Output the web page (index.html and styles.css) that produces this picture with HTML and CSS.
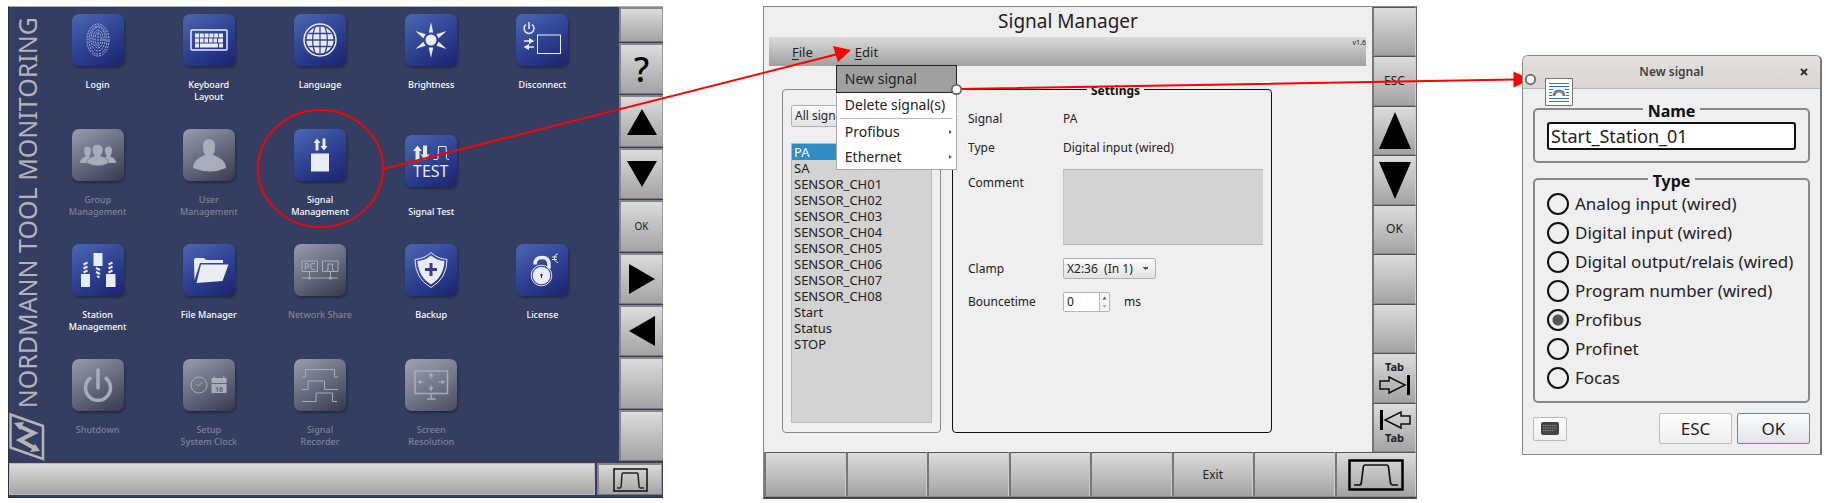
FILE: index.html
```html
<!DOCTYPE html>
<html lang="en">
<head>
    <meta charset="UTF-8">
    <meta name="viewport" content="width=device-width, initial-scale=1.0">
    <title>Signal Manager</title>
    <link rel="stylesheet" href="styles.css">
</head>
<body>
<div class="page">

    <!-- Start screen -->
    <section class="launcher">
        <div class="launcher-top">
            <div class="brand">
                <span class="brand-text">NORDMANN TOOL MONITORING</span>
                <svg class="brand-logo" viewBox="0 0 36 50">
                    <path d="M1.500 2.500 34 14v33L1.500 35.500z" fill="none" stroke="#b4b4b4" stroke-width="2.500"/>
                    <path d="M10 14l15 7-14 7 16 9" fill="none" stroke="#b4b4b4" stroke-width="4"/>
                    <path d="M5 11l10-1-4 8zM31 39l-10 1 5-8z" fill="#b4b4b4"/>
                </svg>
            </div>
            <div class="apps">
                <button class="app">
                    <svg class="tile" viewBox="0 0 52 52"><g class="print">
                        <ellipse cx="26" cy="26" rx="11" ry="16"/><ellipse cx="26" cy="26" rx="9" ry="14"/><ellipse cx="26" cy="25" rx="7" ry="12"/><ellipse cx="26" cy="25" rx="5" ry="9"/><ellipse cx="26" cy="25" rx="3" ry="7"/><path d="M26 19v13"/>
                    </g></svg>
                    <span>Login</span>
                </button>
                <button class="app">
                    <svg class="tile" viewBox="0 0 52 52">
                        <rect class="line" x="8" y="16" width="36" height="20" rx="1"/>
                        <path d="M12 21.500h28" stroke="#e9ebf5" stroke-width="4" stroke-dasharray="4 .8"/>
                        <path d="M12 26.500h4m1 0h3.500m1 0h3.500m1 0h3.500m1 0h3.500m1 0h5M12 31.500h4m1 0h18m1 0h4" stroke="#e9ebf5" stroke-width="4"/>
                    </svg>
                    <span>Keyboard<br>Layout</span>
                </button>
                <button class="app">
                    <svg class="tile" viewBox="0 0 52 52">
                        <circle class="line" cx="26" cy="26" r="16" stroke-width="2"/>
                        <circle class="fill" cx="26" cy="26" r="13.500"/>
                        <path d="M26 12v28M12 26h28M14.500 19.500h23M14.500 32.500h23M21 13q-5 13 0 26M31 13q5 13 0 26" fill="none" stroke="#33479a" stroke-width="1.300"/>
                    </svg>
                    <span>Language</span>
                </button>
                <button class="app">
                    <svg class="tile" viewBox="0 0 52 52">
                        <circle class="fill" cx="26" cy="26" r="5.500"/>
                        <g class="fill"><path id="ray" d="M23.800 18.500 26 8l2.200 10.500z"/><use href="#ray" transform="rotate(60 26 26)"/><use href="#ray" transform="rotate(120 26 26)"/><use href="#ray" transform="rotate(180 26 26)"/><use href="#ray" transform="rotate(240 26 26)"/><use href="#ray" transform="rotate(300 26 26)"/></g>
                    </svg>
                    <span>Brightness</span>
                </button>
                <button class="app">
                    <svg class="tile" viewBox="0 0 52 52">
                        <path class="line" d="M13 8v7M10 10.500a5 5 0 1 0 6 0M8 27h6M18 33h-6"/>
                        <path class="fill" d="M13 24l5.500 3-5.500 3zM13 30l-5.500 3 5.500 3z"/>
                        <rect class="line thin" x="21.500" y="21" width="23" height="18.500"/>
                    </svg>
                    <span>Disconnect</span>
                </button>

                <button class="app off" disabled>
                    <svg class="tile" viewBox="0 0 52 52">
                        <g class="fill"><path d="M8 34q0-5 6-6.500-2-3-2-6 0-4 3.500-4t3.500 4q0 3-2 6l5 2-4 4.500zM44 34q0-5-6-6.500 2-3 2-6 0-4-3.500-4t-3.500 4q0 3 2 6l-5 2 4 4.500z"/>
                        <path d="M14.500 34q0-5 8-7-2.500-3-2.500-6.500 0-5 5.500-5t5.500 5q0 3.500-2.500 6.500 8 2 8 7-11 5.500-22 0z" stroke="#70788c" stroke-width=".8"/></g>
                    </svg>
                    <span>Group<br>Management</span>
                </button>
                <button class="app off" disabled>
                    <svg class="tile" viewBox="0 0 52 52">
                        <path class="fill" d="M10 39q0-9 12-13-2-3-2-8 0-8 6-8t6 8q0 5-2 8 13 4 13 13-16 7-33 0z"/>
                    </svg>
                    <span>User<br>Management</span>
                </button>
                <button class="app">
                    <svg class="tile" viewBox="0 0 52 52">
                        <path class="fill" d="M23 9.500l3.500 4.500h-2v7.500h-3V14h-2zM30 21.500l-3.500-4.500h2V9.500h3V17h2zM17 24.500h18v18H17z"/>
                    </svg>
                    <span>Signal<br>Management</span>
                </button>
                <button class="app app-low">
                    <svg class="tile" viewBox="0 0 52 52">
                        <path class="fill" d="M12.500 10.500l4.500 5.500h-2.500v9h-4v-9H8zM20 25l-4.500-5.500H18v-9h4v9h2.500z"/>
                        <path class="line thin" d="M28.500 24.500h3.500q1 0 1-2l.5-11h7.500l.5 11q0 2 1 2h1.500"/>
                        <text x="8" y="42" class="tile-test">TEST</text>
                    </svg>
                    <span>Signal Test</span>
                </button>
                <div></div>

                <button class="app">
                    <svg class="tile" viewBox="0 0 52 52">
                        <path class="fill" d="M9 30h9v13H9zM21.500 9h9v13h-9zM34 30h9.500v13H34z"/>
                        <path class="line thick" d="M11.500 20.500l4-2M11.500 24.500l4-2M11.500 28.500l4-2M24 24l4 2M24 28l4 2M25 32l2.500 1.500M36.500 20.500l4-2M36.500 24.500l4-2M36.500 28.500l4-2"/>
                    </svg>
                    <span>Station<br>Management</span>
                </button>
                <button class="app">
                    <svg class="tile" viewBox="0 0 52 52">
                        <path class="fill" d="M11 16l1-2h9l2 2h17v3H17L11.500 36zM18 20.500h27.500L39.500 37l-26 2z"/>
                    </svg>
                    <span>File Manager</span>
                </button>
                <button class="app off" disabled>
                    <svg class="tile" viewBox="0 0 52 52">
                        <path class="line thin" d="M8 17h15.500v10.500H8zM28.500 17H44v10.500H28.500zM8 34h36M15.500 28v6M36.500 28v6M32 26h2v-6h4.500v6h2"/>
                        <text x="10" y="25.500" class="tile-pc">PC</text>
                        <circle class="fill" cx="15.500" cy="34" r="1.500"/><circle class="fill" cx="36.500" cy="34" r="1.500"/>
                    </svg>
                    <span>Network Share</span>
                </button>
                <button class="app">
                    <svg class="tile" viewBox="0 0 52 52">
                        <path class="line thin" d="M26 8.500q6 6 16 7 0 19-16 28-16-9-16-28 10-1 16-7z"/>
                        <path class="fill" d="M26 11.500q6 5 13.500 5.500-1 16-13.500 23.500Q13.500 33 12.500 17 20 16.500 26 11.500z"/>
                        <path d="M26 19v13M20 25.500h12" stroke="#2d3f90" stroke-width="3"/>
                    </svg>
                    <span>Backup</span>
                </button>
                <button class="app">
                    <svg class="tile" viewBox="0 0 52 52">
                        <path class="line heavy" d="M19 20.500q0-7 7-7t7 7v4"/>
                        <circle class="line thin" cx="25.500" cy="31.500" r="10.300"/><circle class="fill" cx="25.500" cy="31.500" r="8.800"/>
                        <circle cx="25.500" cy="31" r="1.200" fill="#26357f"/><path d="M25.500 31v3" stroke="#26357f"/>
                        <path class="line thin" d="M42 10h-1q-2.500 1-2.500 4t2.500 4.500h1M36 13h5M36 15.500h5"/>
                    </svg>
                    <span>License</span>
                </button>

                <button class="app off" disabled>
                    <svg class="tile" viewBox="0 0 52 52">
                        <path class="line heavy" d="M19 18.500a12.500 12.500 0 1 0 14 0"/><path class="line heavy" d="M26 11v18" stroke-linecap="round"/>
                    </svg>
                    <span>Shutdown</span>
                </button>
                <button class="app off" disabled>
                    <svg class="tile" viewBox="0 0 52 52">
                        <circle class="line thin" cx="16" cy="26" r="8"/><path class="line thin" d="M13 25l2.500 2 4-4"/>
                        <path class="fill" d="M28.500 19h15v5h-15zM30.500 17.500h1.500v2h-1.500zM40 17.500h1.500v2H40z"/>
                        <path class="fill" d="M28.500 25h15v9h-15z"/><text x="32" y="32.500" class="tile-day">16</text>
                    </svg>
                    <span>Setup<br>System Clock</span>
                </button>
                <button class="app off" disabled>
                    <svg class="tile" viewBox="0 0 52 52">
                        <path class="line thin" d="M8 18h3.500v-7.500h29V18H44M8 30.500h6V22h16.500v8.500H44M8 42.500h14V34h16.500v8.500H43"/>
                    </svg>
                    <span>Signal<br>Recorder</span>
                </button>
                <button class="app off light" disabled>
                    <svg class="tile" viewBox="0 0 52 52">
                        <rect class="line" x="10" y="12" width="32.500" height="22.500"/>
                        <path class="line thin" d="M26 16v4M26 26v4M15 23h4M33 23h4"/>
                        <path class="line" d="M26 35v5M22 40h8.500"/>
                        <path class="fill" d="M26 13.500l2.500 4h-5zM26 32.500l2.500-4h-5zM12 23l4-2.500v5zM40.500 23l-4-2.500v5z"/>
                    </svg>
                    <span>Screen<br>Resolution</span>
                </button>
            </div>
            <div class="keys">
                <button class="key key-first" aria-label="Blank"></button>
                <button class="key key-help">?</button>
                <button class="key" aria-label="Up"><svg width="30" height="26" viewBox="0 0 30 26"><path d="M15 0l15 26H0z"/></svg></button>
                <button class="key" aria-label="Down"><svg width="30" height="26" viewBox="0 0 30 26"><path d="M15 26L30 0H0z"/></svg></button>
                <button class="key">OK</button>
                <button class="key" aria-label="Right"><svg width="26" height="30" viewBox="0 0 26 30"><path d="M0 0v30l26-15z"/></svg></button>
                <button class="key" aria-label="Left"><svg width="26" height="30" viewBox="0 0 26 30"><path d="M26 0v30L0 15z"/></svg></button>
                <button class="key" aria-label="Blank"></button>
                <button class="key" aria-label="Blank"></button>
            </div>
        </div>
        <div class="launcher-bottom">
            <div class="status"></div>
            <button class="key key-pulse" aria-label="Monitor">
                <svg width="35" height="24" viewBox="0 0 35 24"><path d="M1 1h33v22H1z" fill="none" stroke="#111" stroke-width="1.500"/><path d="M4 20h3q1 0 1.200-2L9 6q0-1 1-1h14q1 0 1 1l1 12q.2 2 1.500 2H31" fill="none" stroke="#222" stroke-width="1.500"/></svg>
            </button>
        </div>
    </section>

    <!-- Signal manager -->
    <section class="manager">
        <div class="manager-top">
            <div class="manager-main">
                <h1 class="manager-title">Signal Manager</h1>
                <nav class="menubar">
                    <button class="menu-btn"><u>F</u>ile</button>
                    <div class="menu-wrap">
                        <button class="menu-btn"><u>E</u>dit</button>
                        <div class="menu">
                            <button class="menu-item selected">New signal</button>
                            <button class="menu-item">Delete signal(s)</button>
                            <hr class="menu-line">
                            <button class="menu-item sub">Profibus</button>
                            <button class="menu-item sub">Ethernet</button>
                        </div>
                    </div>
                    <span class="version">v1.6</span>
                </nav>
                <div class="manager-body">
                    <div class="signals">
                        <select class="combo" aria-label="Filter"><option>All signals</option></select>
                        <select class="signal-list" size="17" aria-label="Signals">
                            <option selected>PA</option>
                            <option>SA</option>
                            <option>SENSOR_CH01</option>
                            <option>SENSOR_CH02</option>
                            <option>SENSOR_CH03</option>
                            <option>SENSOR_CH04</option>
                            <option>SENSOR_CH05</option>
                            <option>SENSOR_CH06</option>
                            <option>SENSOR_CH07</option>
                            <option>SENSOR_CH08</option>
                            <option>Start</option>
                            <option>Status</option>
                            <option>STOP</option>
                        </select>
                    </div>
                    <fieldset class="settings">
                        <legend>Settings</legend>
                        <div class="settings-grid">
                            <span>Signal</span>
                            <span>PA</span>
                            <span>Type</span>
                            <span>Digital input (wired)</span>
                            <label class="comment-label" for="comment">Comment</label>
                            <textarea id="comment" class="comment"></textarea>
                            <label for="clamp">Clamp</label>
                            <select id="clamp" class="combo clamp"><option>X2:36&nbsp; (In 1)</option></select>
                            <label for="bounce">Bouncetime</label>
                            <div class="bounce">
                                <div class="spin">
                                    <input id="bounce" type="text" value="0">
                                    <svg width="9" height="18" viewBox="0 0 9 18"><path d="M2.500 6.500l2-3 2 3z" fill="#555"/><path d="M2.500 12l2 3 2-3z" fill="#aaa"/></svg>
                                </div>
                                <span>ms</span>
                            </div>
                        </div>
                    </fieldset>
                </div>
            </div>
            <div class="keys keys-flat">
                <button class="key" aria-label="Blank"></button>
                <button class="key">ESC</button>
                <button class="key" aria-label="Up"><svg width="32" height="37" viewBox="0 0 32 37"><path d="M16 0l16 37H0z"/></svg></button>
                <button class="key" aria-label="Down"><svg width="32" height="37" viewBox="0 0 32 37"><path d="M16 37L32 0H0z"/></svg></button>
                <button class="key">OK</button>
                <button class="key" aria-label="Blank"></button>
                <button class="key" aria-label="Blank"></button>
                <button class="key key-tab"><b>Tab</b><svg width="32" height="20" viewBox="0 0 32 20"><path d="M1 6h9V2l16 8-16 8v-4H1z" fill="none" stroke="#111" stroke-width="1.500"/><path d="M28 0h3v20h-3z"/></svg></button>
                <button class="key key-tab"><svg width="32" height="20" viewBox="0 0 32 20"><path d="M31 6h-9V2L6 10l16 8v-4h9z" fill="none" stroke="#111" stroke-width="1.500"/><path d="M1 0h3v20H1z"/></svg><b>Tab</b></button>
            </div>
        </div>
        <div class="manager-bottom keys-flat">
            <button class="key" aria-label="F1"></button>
            <button class="key" aria-label="F2"></button>
            <button class="key" aria-label="F3"></button>
            <button class="key" aria-label="F4"></button>
            <button class="key" aria-label="F5"></button>
            <button class="key">Exit</button>
            <button class="key" aria-label="F7"></button>
            <button class="key" aria-label="Monitor">
                <svg width="56" height="32" viewBox="0 0 56 32"><path d="M1.500 1.500h53v29h-53z" fill="none" stroke="#000" stroke-width="2.500"/><path d="M6 26h5q2 0 2.300-2l2-16q.2-2 2-2h21q2 0 2.200 2l2 16q.5 2 2.500 2h5" fill="none" stroke="#111" stroke-width="1.700"/></svg>
            </button>
        </div>
    </section>

    <!-- New signal dialog -->
    <section class="dialog">
        <header class="dialog-head">
            <h2>New signal</h2>
            <button class="close" aria-label="Close"><svg width="8" height="8" viewBox="0 0 8 8"><path d="M1 1l6 6M7 1L1 7" stroke="#2e3436" stroke-width="2"/></svg></button>
            <svg class="wrap-icon" viewBox="0 0 28 28">
                <path d="M.5.500h27v27H.5z" fill="#fff" stroke="#777"/>
                <path d="M4 5.500h20M4 8.500h20M4 20.500h20M4 23.500h20M4 11.500h4M20 11.500h4M4 14.500h3M21 14.500h3M4 17.500h3M21 17.500h3" stroke="#2e75b6"/>
                <path d="M9 18q0-5 5-5t5 5" fill="none" stroke="#7b7b7b" stroke-width="3"/>
            </svg>
        </header>
        <div class="dialog-body">
            <fieldset class="group">
                <legend>Name</legend>
                <input class="name-input" type="text" value="Start_Station_01" aria-label="Name">
            </fieldset>
            <fieldset class="group group-type">
                <legend>Type</legend>
                <label class="radio"><input type="radio" name="type">Analog input (wired)</label>
                <label class="radio"><input type="radio" name="type">Digital input (wired)</label>
                <label class="radio"><input type="radio" name="type">Digital output/relais (wired)</label>
                <label class="radio"><input type="radio" name="type">Program number (wired)</label>
                <label class="radio"><input type="radio" name="type" checked>Profibus</label>
                <label class="radio"><input type="radio" name="type">Profinet</label>
                <label class="radio"><input type="radio" name="type">Focas</label>
            </fieldset>
            <div class="actions">
                <button class="btn btn-kbd" aria-label="Keyboard"><svg width="18" height="13" viewBox="0 0 18 13"><rect width="18" height="13" rx="2" fill="#444"/><path d="M2 3.500h14M2 6h14M2 8.500h11" stroke="#888" stroke-dasharray="1.500 .7"/></svg></button>
                <button class="btn">ESC</button>
                <button class="btn btn-ok">OK</button>
            </div>
        </div>
    </section>

    <!-- Callout arrows over the three windows -->
    <svg class="arrows" viewBox="0 0 1826 503" preserveAspectRatio="none">
        <g fill="none" stroke="#f00" stroke-width="2">
            <ellipse cx="320.500" cy="168.500" rx="62.500" ry="58.500"/>
            <path d="M383 169L838 54M961 89L1515 79.500"/>
        </g>
        <path d="M833 46l18 4-13 12zM1513.500 71.500v16l8.500-4v-8z" fill="#f00"/>
        <circle cx="956.500" cy="89.500" r="4.700" fill="#fff" stroke="#666" stroke-width="1.700"/>
        <circle cx="1530.500" cy="79.500" r="4.700" fill="#fff" stroke="#777" stroke-width="2"/>
    </svg>
</div>
</body>
</html>
```
FILE: styles.css
```css
* {
    box-sizing: border-box;
}
body {
    margin: 0;
    background: #fff;
    font-family: "Noto Sans", "Open Sans", sans-serif;
    font-size: 12px;
    line-height: 16px;
    color: #222;
}
button, input, select, textarea {
    font: inherit;
    color: inherit;
    margin: 0;
    padding: 0;
}
button {
    border: none;
    background: none;
}
svg {
    display: block;
}
.page {
    position: relative;
    display: flex;
    align-items: flex-start;
    padding: 6px 4px 5px 8px;
}

/* start screen */
.launcher {
    flex: 654;
    background: #333e62;
    border: 1px solid #2a3040;
    border-top-color: #a9aeae;
    border-right: none;
}
.launcher-top {
    display: flex;
}
.brand {
    width: 33px;
    height: 455px;
    display: flex;
    flex-direction: column;
    justify-content: flex-end;
    gap: 4px;
}
.brand-text {
    writing-mode: vertical-rl;
    transform: rotate(180deg);
    white-space: nowrap;
    font-size: 25px;
    line-height: 36px;
    color: #b4b4b4;
}
.brand-logo {
    width: 36px;
    height: 50px;
    flex: none;
}
.apps {
    flex: 1;
    display: grid;
    grid-template-columns: repeat(5, 1fr);
    grid-auto-rows: 89px;
    row-gap: 26px;
    padding: 7px 21px 0 0;
}
.app {
    display: flex;
    flex-direction: column;
    align-items: center;
    gap: 13px;
    font-size: 9px;
    line-height: 12px;
    font-weight: 500;
    color: #fff;
    text-align: center;
}
.app-low {
    justify-content: flex-end;
    gap: 19px;
}
.app.off {
    color: #7f838d;
}
.tile {
    width: 52px;
    height: 52px;
    flex: none;
    border-radius: 7px;
    background: linear-gradient(150deg, #4b68b2, #2c3f90 55%, #1b2470);
    box-shadow: 1px 2px 3px rgba(0, 0, 0, 0.35);
}
.off .tile {
    background: linear-gradient(150deg, #979dab, #666c7e 50%, #35394c);
}
.light .tile {
    background: linear-gradient(150deg, #a0a4b0, #767b8b 50%, #4a4e60);
}
.tile .fill {
    fill: #e9ebf5;
}
.tile .line {
    fill: none;
    stroke: #e9ebf5;
    stroke-width: 1.5;
}
.tile .thin {
    stroke-width: 1;
}
.tile .thick {
    stroke-width: 2;
}
.tile .heavy {
    stroke-width: 3.5;
}
.off .tile .fill {
    fill: #a9adb9;
}
.off .tile .line {
    stroke: #a9adb9;
}
.print {
    fill: none;
    stroke: #aeb9dc;
    stroke-width: 1;
    stroke-dasharray: 2 1;
}
.tile-test {
    font-size: 16px;
    font-weight: 400;
    fill: #e9ebf5;
}
.tile-pc {
    font-size: 9px;
    fill: #a9adb9;
}
.tile-day {
    font-size: 7px;
    font-weight: 700;
    fill: #5d6274;
}

/* grey hardware keys */
.keys {
    width: 44px;
    display: flex;
    flex-direction: column;
    gap: 1px;
    padding-bottom: 1px;
}
.key {
    flex: 1;
    display: flex;
    align-items: center;
    justify-content: center;
    min-width: 0;
    background: linear-gradient(#dcdcdc, #a3a3a3);
    border: 1px solid #999;
    border-width: 2px 1px 1px 2px;
    border-color: #85858a #999 #777 #85858a;
    font-size: 10px;
    color: #222;
}
.key-first {
    flex: none;
    height: 35px;
}
.key-help {
    font-size: 34px;
    line-height: 34px;
    font-weight: 500;
    color: #000;
}
.launcher-bottom {
    display: flex;
    gap: 2px;
    padding: 1px 1px 2px 0;
    height: 35px;
}
.status {
    flex: 1;
    background: linear-gradient(#dcdcdc, #a3a3a3);
    border: 1px solid #bbb;
}
.key-pulse {
    flex: none;
    width: 65px;
}

/* signal manager */
.manager {
    flex: 652;
    margin-left: 100px;
    background: #efefef;
    border: 1px solid #888;
    border-right: 1px solid #666;
    border-bottom: 2px solid #444;
}
.manager-top {
    display: flex;
}
.manager-main {
    flex: 1;
}
.manager-title {
    margin: 0;
    font-size: 19px;
    line-height: 28px;
    height: 30px;
    font-weight: 400;
    text-align: center;
}
.menubar {
    display: flex;
    height: 29px;
    margin: 0 6px 0 5px;
    padding-left: 2px;
    background: linear-gradient(#dadada, #a0a0a0);
    font-size: 13px;
}
.menu-btn {
    height: 29px;
    padding: 0 21px;
}
.menu-btn u {
    text-underline-offset: 2px;
}
.menu-wrap {
    position: relative;
}
.menu {
    position: absolute;
    z-index: 2;
    top: 29px;
    left: 2px;
    width: 121px;
    background: #fff;
    border: 1px solid #aaa;
    border-top: none;
    font-size: 14px;
}
.menu-item {
    display: block;
    width: 100%;
    height: 26px;
    padding-left: 8px;
    text-align: left;
    white-space: nowrap;
}
.menu-item.selected {
    background: #a0a0a0;
    outline: 1px solid #222;
}
.menu-item.sub {
    display: flex;
    align-items: center;
    justify-content: space-between;
    padding-right: 4px;
    height: 25px;
}
.menu-item.sub::after {
    content: "";
    border: 2px solid transparent;
    border-left: 3px solid #555;
    border-right: none;
}
.menu-line {
    margin: 0 3px;
    border: none;
    border-top: 1px solid #bbb;
}
.version {
    margin-left: auto;
    font-size: 7px;
    line-height: 11px;
}
.manager-body {
    display: flex;
    gap: 11px;
    padding: 13px 100px 19px 18px;
}
.signals {
    width: 159px;
    margin-top: 10px;
    padding: 15px 8px 9px;
    border: 1px solid #888;
    border-radius: 4px;
    display: flex;
    flex-direction: column;
    gap: 16px;
}
.combo {
    appearance: none;
    height: 22px;
    padding: 0 3px;
    border: 1px solid #b0b0b0;
    border-radius: 2px;
    background: linear-gradient(#fbfbfb, #e2e2e2);
    font-size: 12px;
}
.signal-list {
    height: 280px;
    padding: 0;
    border: 1px solid #bbb;
    border-radius: 0;
    background: #d3d3d3;
    font-size: 13px;
    overflow: hidden;
    outline: none;
}
.signal-list option {
    display: flex;
    align-items: center;
    height: 16px;
    min-height: 16px;
    padding: 0 2px;
}
.signal-list option:checked {
    background: #308cc6 linear-gradient(#308cc6, #308cc6);
    color: #fff;
}
.settings {
    flex: 1;
    min-width: 0;
    margin: 0;
    padding: 0 8px 0 15px;
    border: 1px solid #111;
    border-radius: 4px;
}
.settings legend {
    margin: 0 auto;
    padding: 4px 4px 0;
    font-weight: 700;
    color: #111;
}
.settings-grid {
    display: grid;
    grid-template-columns: 95px 1fr;
    row-gap: 13px;
    align-items: center;
    padding-top: 12px;
}
.comment-label {
    align-self: start;
    padding-top: 6px;
}
.comment {
    display: block;
    height: 76px;
    resize: none;
    border: 1px solid #b5b5b5;
    border-right: none;
    border-left-color: #c5c5c5;
    background: #d3d3d3;
}
.clamp {
    width: 93px;
    height: 21px;
    justify-self: start;
    background:
        linear-gradient(45deg, transparent 50%, #555 50%) right 9px center / 3px 3px no-repeat,
        linear-gradient(-45deg, transparent 50%, #555 50%) right 6px center / 3px 3px no-repeat,
        linear-gradient(#fbfbfb, #e2e2e2);
}
.bounce {
    display: flex;
    align-items: center;
    gap: 14px;
}
.spin {
    display: flex;
    width: 47px;
    height: 20px;
    border: 1px solid #b5b5b5;
    border-radius: 2px;
    background: #f6f6f6;
}
.spin input {
    flex: 1;
    min-width: 0;
    padding-left: 3px;
    border: none;
    border-right: 1px solid #bbb;
    background: #fff;
}
.keys-flat .key {
    border-width: 1px 1px 1px 2px;
    border-color: #555 #ccc #888 #777;
    font-size: 12px;
}
.keys.keys-flat {
    gap: 0;
    padding-bottom: 0;
}
.keys-flat .key-tab {
    flex-direction: column;
    gap: 1px;
    font-size: 11px;
    line-height: 14px;
}
.manager-bottom {
    display: flex;
    height: 45px;
}

/* dialog */
.dialog {
    flex: 297;
    margin: 49px 0 0 105px;
    background: #efefef;
    border: 1px solid #888;
    border-right: 2px solid #777;
    border-radius: 6px 6px 0 0;
    font-size: 17px;
}
.dialog-head {
    position: relative;
    display: flex;
    align-items: center;
    height: 33px;
    padding: 0 12px 0 20px;
    border-bottom: 1px solid #bab5af;
    border-radius: 5px 5px 0 0;
    background: linear-gradient(#e4e1dd, #d9d5d0);
}
.dialog-head h2 {
    flex: 1;
    margin: 0;
    font-size: 12px;
    font-weight: 600;
    text-align: center;
    color: #3b4042;
}
.wrap-icon {
    position: absolute;
    left: 22px;
    top: 22px;
    width: 28px;
    height: 28px;
}
.dialog-body {
    padding: 10px;
}
.group {
    margin: 0;
    padding: 3px 12px 11px;
    border: 2px solid #888;
    border-radius: 5px;
    min-width: 0;
}
.group legend {
    margin: 0 auto;
    padding: 4px 5px 0;
    font-size: 16px;
    line-height: 16px;
    font-weight: 700;
    color: #111;
}
.name-input {
    display: block;
    width: 100%;
    height: 28px;
    padding: 0 2px;
    border: 2px solid #111;
    border-radius: 3px;
    background: #fff;
    font-size: 18px;
}
.group-type {
    margin-top: 6px;
    padding: 0 12px 9px;
}
.radio {
    display: flex;
    align-items: center;
    gap: 6px;
    height: 29px;
    white-space: nowrap;
}
.radio input {
    appearance: none;
    width: 22px;
    height: 22px;
    border: 2px solid #111;
    border-radius: 50%;
}
.radio input:checked {
    background: radial-gradient(circle, #555 5px, transparent 6px);
}
.actions {
    display: flex;
    align-items: center;
    gap: 5px;
    margin-top: 10px;
}
.btn {
    width: 73px;
    height: 31px;
    border: 1px solid #bbb;
    border-radius: 2px;
    background: linear-gradient(#fdfdfd, #eee);
}
.btn-kbd {
    display: flex;
    align-items: center;
    justify-content: center;
    width: 34px;
    height: 24px;
    margin-right: auto;
}
.btn-ok {
    border-color: #4b93bd;
    background: linear-gradient(#fdfdfd, #dde5ec);
}

.arrows {
    position: absolute;
    z-index: 3;
    top: 0;
    left: 0;
    width: 100%;
    height: 503px;
    pointer-events: none;
}
```
